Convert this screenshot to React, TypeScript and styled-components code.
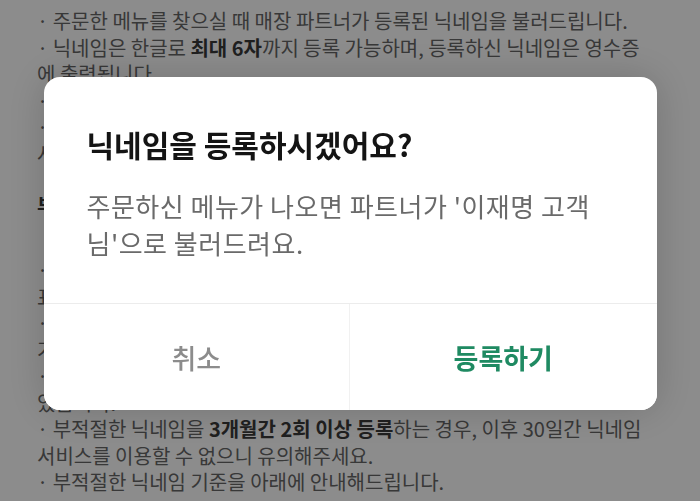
import React from "react";
import styled, { createGlobalStyle } from "styled-components";

const Global = createGlobalStyle`
  html, body { margin: 0; padding: 0; background: #ffffff; }
  body { font-family: "Noto Sans CJK KR", "Noto Sans", sans-serif; }
  * { box-sizing: border-box; }
`;

const Page = styled.div`
  padding: 8px 0 0 37px;
  color: #666666;
  font-size: 20px;
  line-height: 26.5px;
  letter-spacing: 0;
`;

const Section = styled.div<{ $top?: number }>`
  margin-top: ${(p) => p.$top ?? 0}px;
`;

const Line = styled.div`
  white-space: nowrap;
`;

const Strong = styled.b`
  font-weight: 700;
  color: #3a3a3a;
`;

const Heading = styled.div`
  margin-top: 26px;
  font-weight: 700;
  color: #3a3a3a;
  white-space: nowrap;
`;

const Overlay = styled.div`
  position: fixed;
  inset: 0;
  background: rgba(0, 0, 0, 0.45);
  display: flex;
  flex-direction: column;
  align-items: center;
  padding-top: 77px;
`;

const Dialog = styled.div`
  width: 613px;
  background: #ffffff;
  border-radius: 16px;
  overflow: hidden;
  box-shadow: 0 0 40px rgba(0, 0, 0, 0.18);
`;

const Content = styled.div`
  padding: 48px 43px 42px;
`;

const Title = styled.h2`
  margin: 0;
  font-size: 30px;
  line-height: 38px;
  font-weight: 700;
  color: #141414;
  letter-spacing: 0;
`;

const Message = styled.p`
  margin: 24px 0 0;
  font-size: 26px;
  line-height: 37px;
  color: #6a6a6a;
  letter-spacing: 0.5px;
`;

const Footer = styled.div`
  display: grid;
  grid-template-columns: 1fr 1fr;
  height: 107px;
  border-top: 1px solid #ececec;
`;

const Action = styled.button<{ $primary?: boolean }>`
  border: none;
  background: #ffffff;
  font-family: inherit;
  font-size: 27px;
  letter-spacing: 0;
  font-weight: ${(p) => (p.$primary ? 700 : 500)};
  color: ${(p) => (p.$primary ? "#1f8a62" : "#8c8c8c")};
  border-right: ${(p) => (p.$primary ? "none" : "1px solid #f1f1f1")};
  cursor: pointer;
`;

export default function App() {
  return (
    <>
      <Global />
      <Page>
        <Section>
          <Line>· 주문한 메뉴를 찾으실 때 매장 파트너가 등록된 닉네임을 불러드립니다.</Line>
          <Line>
            · 닉네임은 한글로 <Strong>최대 6자</Strong>까지 등록 가능하며, 등록하신 닉네임은 영수증
          </Line>
          <Line>에 출력됩니다.</Line>
          <Line>· 닉네임은 등록 후 언제든지 변경하실 수 있습니다.</Line>
          <Line>· 닉네임을 등록하지 않으신 경우, 주문번호로 매장에서</Line>
          <Line>사용하실 수 있습니다.</Line>
        </Section>
        <Heading>부적절한 닉네임 기준 안내</Heading>
        <Section $top={37.5}>
          <Line>· 욕설, 비속어 등 타인에게 불쾌감을 주는 닉네임</Line>
          <Line>표현은 등록이 제한됩니다.</Line>
          <Line>· 특정 인물, 단체를 비방하거나 사칭하는 닉네임은</Line>
          <Line>가입 후에도 변경 요청될 수 있습니다.</Line>
          <Line>· 파트너가 부르기 어려운 닉네임은 제한될 수</Line>
          <Line>있습니다.</Line>
          <Line>
            · 부적절한 닉네임을 <Strong>3개월간 2회 이상 등록</Strong>하는 경우, 이후 30일간 닉네임
          </Line>
          <Line>서비스를 이용할 수 없으니 유의해주세요.</Line>
          <Line>· 부적절한 닉네임 기준을 아래에 안내해드립니다.</Line>
        </Section>
      </Page>
      <Overlay>
        <Dialog role="dialog">
          <Content>
            <Title>닉네임을 등록하시겠어요?</Title>
            <Message>
              주문하신 메뉴가 나오면 파트너가 '이재명 고객
              <br />
              님'으로 불러드려요.
            </Message>
          </Content>
          <Footer>
            <Action>취소</Action>
            <Action $primary>등록하기</Action>
          </Footer>
        </Dialog>
      </Overlay>
    </>
  );
}
